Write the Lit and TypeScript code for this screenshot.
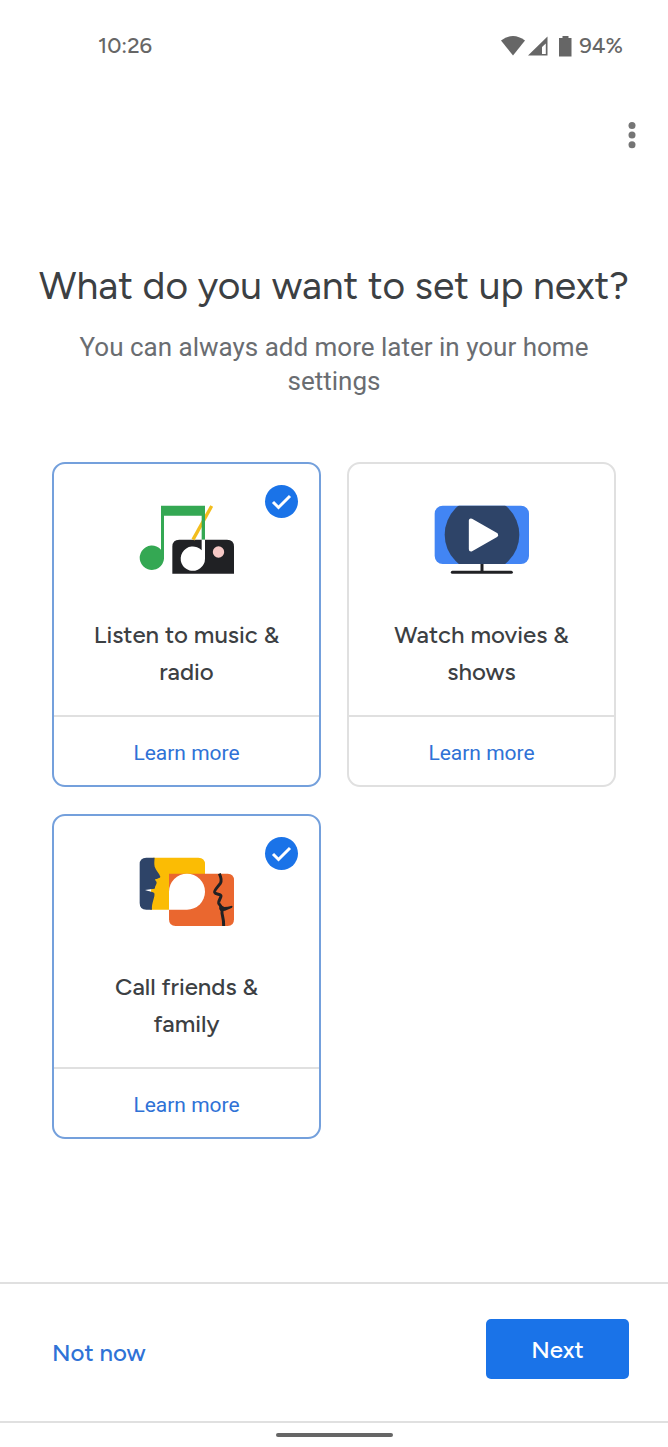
import { LitElement, html, svg, css } from "lit";
import { customElement, property, state } from "lit/decorators.js";
import { classMap } from "lit/directives/class-map.js";

const musicArt = svg`<svg viewBox="42 150 285 213" aria-hidden="true">
  <path d="M142 356V275Q142 254 163 254H306Q327 254 327 275V356Z" fill="#202124"/>
  <path d="M204 254L260 153" stroke="#f2bd1d" stroke-width="10" fill="none"/>
  <path d="M108 152H240V254H230V182H117V311A36.500 36.500 0 1 1 108 284Z" fill="#34a853"/>
  <path d="M230 254H240V311A36.500 36.500 0 1 1 230 286Z" fill="#fff"/>
  <circle cx="280.500" cy="291" r="17" fill="#f6c9c6"/>
</svg>`;

const tvArt = svg`<svg viewBox="42 45 285 213" aria-hidden="true">
  <clipPath id="screen"><rect x="44" y="47" width="283" height="175" rx="24"/></clipPath>
  <rect x="44" y="47" width="283" height="175" rx="24" fill="#4285f4"/>
  <circle cx="186" cy="134" r="112" fill="#2e4468" clip-path="url(#screen)"/>
  <path d="M153 92V178L228 135Z" fill="#fff" stroke="#fff" stroke-width="13" stroke-linejoin="round"/>
  <path d="M186 222V246" stroke="#202124" stroke-width="9"/>
  <path d="M97 247H274" stroke="#202124" stroke-width="9" stroke-linecap="round"/>
</svg>`;

const friendsArt = svg`<svg viewBox="42 141 285 213" aria-hidden="true">
  <path d="M84 143H220Q240 143 240 163V299H75Z" fill="#fbbc04"/>
  <path d="M64 143H89C88 152 87 160 89 170C93 181 103 190 106 200C106 204 95 206 90 208C89 212 95 213 95 218C95 223 89 229 90 234C90 238 75 237 60 240C73 245 85 245 88 250C91 262 79 278 81 299H64Q44 299 44 279V163Q44 143 64 143Z" fill="#2e4468"/>
  <path d="M132 191H308Q327 191 327 211V328Q327 348 308 348H152Q132 348 132 328Z" fill="#ea672f"/>
  <path d="M132 299V245A54 54 0 1 1 186 299Z" fill="#fff"/>
  <path d="M283 191C290 206 290 214 286 220C278 231 267 241 269 247C272 254 288 252 288 258C288 264 280 272 281 279C282 284 289 287 287 292C285 300 294 298 291 307C290 313 297 325 296 348" fill="none" stroke="#202124" stroke-width="9"/>
  <path d="M283 283L298 291Q307 291 321 287Q325 290 318 295L300 302L288 304Z" fill="#202124"/>
</svg>`;

interface Option {
  id: string;
  title: string;
  art: unknown;
  selected: boolean;
}

@customElement("option-card")
export class OptionCard extends LitElement {
  @property({ attribute: false }) option!: Option;

  static styles = css`
    :host {
      display: block;
    }
    .card {
      position: relative;
      box-sizing: border-box;
      height: 100%;
      display: flex;
      flex-direction: column;
      border: 2px solid #e0e0e0;
      border-radius: 13px;
      overflow: hidden;
      text-align: center;
    }
    .selected {
      border-color: #74a0dc;
    }
    .pick {
      flex: 1;
      display: flex;
      flex-direction: column;
      align-items: center;
      gap: 40px;
      padding: 41px 32px 25px;
      cursor: pointer;
    }
    .art svg {
      display: block;
      width: 95px;
      height: 71px;
      overflow: visible;
    }
    .title {
      font: 500 24px/37px Figtree, Lato, sans-serif;
      color: #3c4043;
    }
    .box {
      position: absolute;
      top: 21px;
      right: 21px;
      width: 33px;
      height: 33px;
      display: grid;
    }
    .box > * {
      grid-area: 1 / 1;
    }
    .box input {
      appearance: none;
      margin: 0;
      border-radius: 50%;
    }
    .box input:checked {
      background: #1a73e8;
    }
    .tick {
      display: none;
      pointer-events: none;
    }
    input:checked + .tick {
      display: block;
    }
    .more {
      border-top: 2px solid #e0e0e0;
      font: 400 21px/28px Roboto, sans-serif;
      color: #2f72d6;
      text-decoration: none;
      padding: 22px 0 18px;
    }
  `;

  private toggle(e: Event) {
    const selected = (e.target as HTMLInputElement).checked;
    this.dispatchEvent(new CustomEvent("option-toggle", { detail: { id: this.option.id, selected } }));
  }

  render() {
    const { id, title, art, selected } = this.option;
    return html`<article class=${classMap({ card: true, selected })}>
      <label class="pick" for=${id}>
        <span class="art">${art}</span>
        <span class="title">${title}</span>
        <span class="box">
          <input id=${id} type="checkbox" .checked=${selected} @change=${this.toggle} />
          <svg class="tick" viewBox="0 0 33 33" aria-hidden="true">
            <path d="M8 17L13.500 22.500L25 11" fill="none" stroke="#fff" stroke-width="3" />
          </svg>
        </span>
      </label>
      <a class="more" href="#${id}">Learn more</a>
    </article>`;
  }
}

@customElement("app-root")
export class AppRoot extends LitElement {
  @state() private options: Option[] = [
    { id: "music", title: "Listen to music & radio", art: musicArt, selected: true },
    { id: "movies", title: "Watch movies & shows", art: tvArt, selected: false },
    { id: "calls", title: "Call friends & family", art: friendsArt, selected: true },
  ];

  static styles = css`
    :host {
      display: flex;
      flex-direction: column;
      min-height: 100vh;
      background: #fff;
      font-family: Figtree, Lato, sans-serif;
      color: #3c4043;
    }
    .status {
      display: flex;
      justify-content: space-between;
      align-items: center;
      padding: 32px 45px 0 98px;
      font-size: 22px;
      font-weight: 500;
      line-height: 28px;
      color: #666;
    }
    .indicators {
      display: flex;
      align-items: center;
    }
    .indicators svg {
      width: 72px;
      height: 24px;
      margin-right: 6px;
    }
    .toolbar {
      display: flex;
      justify-content: flex-end;
      padding: 55px 16px 0 0;
    }
    button {
      border: 0;
      padding: 0;
      background: none;
      font: inherit;
      cursor: pointer;
    }
    .menu {
      width: 40px;
      height: 40px;
    }
    .menu svg {
      display: block;
      width: 40px;
      height: 40px;
    }
    main {
      flex: 1;
      padding: 0 52px 48px;
    }
    .heading {
      margin: 107px -24px 0;
      text-align: center;
      font-size: 39px;
      font-weight: 400;
      line-height: 48px;
    }
    .lead {
      margin: 20px 0 64px;
      text-align: center;
      font: 400 26px/34px Roboto, sans-serif;
      color: #6a6d71;
    }
    .cards {
      display: grid;
      grid-template-columns: 1fr 1fr;
      gap: 27px 26px;
    }
    .actions {
      display: flex;
      justify-content: space-between;
      align-items: flex-end;
      border-top: 2px solid #e0e0e0;
      border-bottom: 2px solid #e0e0e0;
      padding: 35px 39px 42px 52px;
      font-size: 24px;
      font-weight: 500;
    }
    .skip {
      height: 54px;
      color: #2f72d6;
    }
    .next {
      min-width: 143px;
      height: 60px;
      border-radius: 5px;
      background: #1a73e8;
      color: #fff;
    }
    .gesture {
      display: flex;
      justify-content: center;
      padding: 10px 0;
    }
    .handle {
      width: 117px;
      height: 4px;
      border-radius: 2px;
      background: #666;
    }
  `;

  private onToggle(e: CustomEvent<{ id: string; selected: boolean }>) {
    const { id, selected } = e.detail;
    this.options = this.options.map((o) => (o.id === id ? { ...o, selected } : o));
  }

  render() {
    return html`
      <header>
        <div class="status">
          <span>10:26</span>
          <span class="indicators">
            <svg viewBox="0 0 72 24" fill="#666" aria-hidden="true">
              <path d="M0 6.500Q12 -2.500 24 6.500L12 21.500Z" />
              <path d="M46.500 2.500V21.500H27ZM44.800 9.500L41 13V20H44.800Z" fill-rule="evenodd" />
              <path d="M61.500 2H67.500V4H70.500V22.500H58V4H61.500Z" />
            </svg>
            <span>94%</span>
          </span>
        </div>
        <div class="toolbar">
          <button class="menu" aria-label="More options">
            <svg viewBox="0 0 40 40" fill="#757575" aria-hidden="true">
              <circle cx="20" cy="10.500" r="3.500" />
              <circle cx="20" cy="20" r="3.500" />
              <circle cx="20" cy="29.800" r="3.500" />
            </svg>
          </button>
        </div>
      </header>
      <main>
        <h1 class="heading">What do you want to set up next?</h1>
        <p class="lead">You can always add more later in your home settings</p>
        <div class="cards">
          ${this.options.map((o) => html`<option-card .option=${o} @option-toggle=${this.onToggle}></option-card>`)}
        </div>
      </main>
      <footer>
        <div class="actions">
          <button class="skip">Not now</button>
          <button class="next">Next</button>
        </div>
        <div class="gesture"><span class="handle"></span></div>
      </footer>
    `;
  }
}
